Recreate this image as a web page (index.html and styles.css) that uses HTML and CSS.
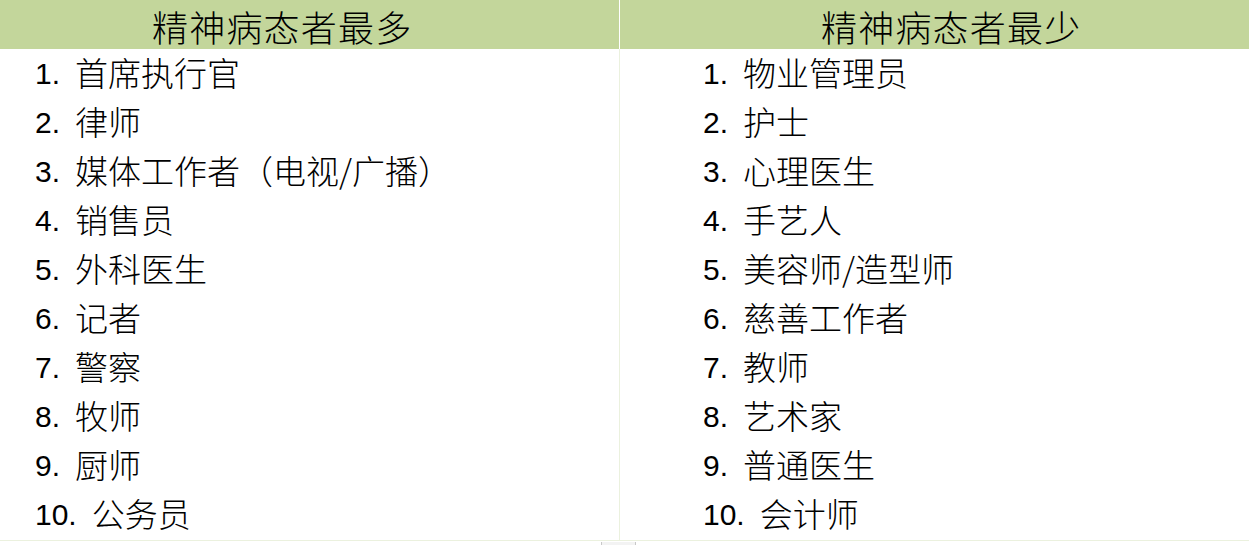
FILE: index.html
```html
<!DOCTYPE html>
<html lang="zh-CN">
<head>
<meta charset="utf-8">
<title>精神病态者</title>
<link rel="stylesheet" href="styles.css">
</head>
<body>
<div class="table">
  <div class="head head-left"><span>精神病态者最多</span></div>
  <div class="head head-right"><span>精神病态者最少</span></div>
  <ol class="col col-left">
    <li><span class="n">1.</span><span class="t">首席执行官</span></li>
    <li><span class="n">2.</span><span class="t">律师</span></li>
    <li><span class="n">3.</span><span class="t">媒体工作者（电视/广播）</span></li>
    <li><span class="n">4.</span><span class="t">销售员</span></li>
    <li><span class="n">5.</span><span class="t">外科医生</span></li>
    <li><span class="n">6.</span><span class="t">记者</span></li>
    <li><span class="n">7.</span><span class="t">警察</span></li>
    <li><span class="n">8.</span><span class="t">牧师</span></li>
    <li><span class="n">9.</span><span class="t">厨师</span></li>
    <li><span class="n">10.</span><span class="t">公务员</span></li>
  </ol>
  <ol class="col col-right">
    <li><span class="n">1.</span><span class="t">物业管理员</span></li>
    <li><span class="n">2.</span><span class="t">护士</span></li>
    <li><span class="n">3.</span><span class="t">心理医生</span></li>
    <li><span class="n">4.</span><span class="t">手艺人</span></li>
    <li><span class="n">5.</span><span class="t">美容师/造型师</span></li>
    <li><span class="n">6.</span><span class="t">慈善工作者</span></li>
    <li><span class="n">7.</span><span class="t">教师</span></li>
    <li><span class="n">8.</span><span class="t">艺术家</span></li>
    <li><span class="n">9.</span><span class="t">普通医生</span></li>
    <li><span class="n">10.</span><span class="t">会计师</span></li>
  </ol>
</div>
<div class="foot"></div>
</body>
</html>
```

FILE: styles.css
```css
html, body {
  margin: 0;
  padding: 0;
  background: #ffffff;
}
body {
  width: 1249px;
  height: 545px;
  overflow: hidden;
  font-family: "Noto Sans CJK SC", sans-serif;
  color: #000;
}
.table {
  display: grid;
  grid-template-columns: 619px 1px 629px;
  grid-template-rows: 49px 491px;
  border-bottom: 1px solid #ebf1de;
}
.head {
  background: #c3d69b;
  display: flex;
  align-items: center;
  height: 49px;
  font-family: "Noto Sans CJK SC", serif;
  font-weight: 300;
  font-size: 36px;
  line-height: 1;
  letter-spacing: 1.2px;
  white-space: nowrap;
}
.head-left {
  grid-column: 1;
  padding-left: 152px;
  border-right: 1px solid #ffffff;
  grid-column-end: span 2;
}
.head-right {
  grid-column: 3;
  padding-left: 201px;
}
.head span {
  position: relative;
  top: 1px;
}
.col {
  list-style: none;
  margin: 0;
  padding: 0;
  display: flex;
  flex-direction: column;
}
.col-left {
  grid-column: 1;
  padding-left: 35px;
  border-right: 1px solid #ebf1de;
  grid-column-end: span 2;
}
.col-right {
  grid-column: 3;
  padding-left: 83px;
}
.col li {
  height: 49px;
  display: flex;
  align-items: center;
  white-space: nowrap;
}
.n {
  font-family: "Liberation Sans", Arial, sans-serif;
  font-size: 30px;
  margin-right: 15px;
}
.t {
  font-family: "Noto Sans CJK SC", sans-serif;
  font-weight: 300;
  font-size: 33px;
  line-height: 1;
  position: relative;
  top: -1px;
}
.foot {
  margin-left: 601px;
  margin-top: 1px;
  width: 33px;
  height: 4px;
  background: #f3f3f3;
  border-left: 1px solid #c8c8c8;
  border-right: 1px solid #c8c8c8;
}
```
